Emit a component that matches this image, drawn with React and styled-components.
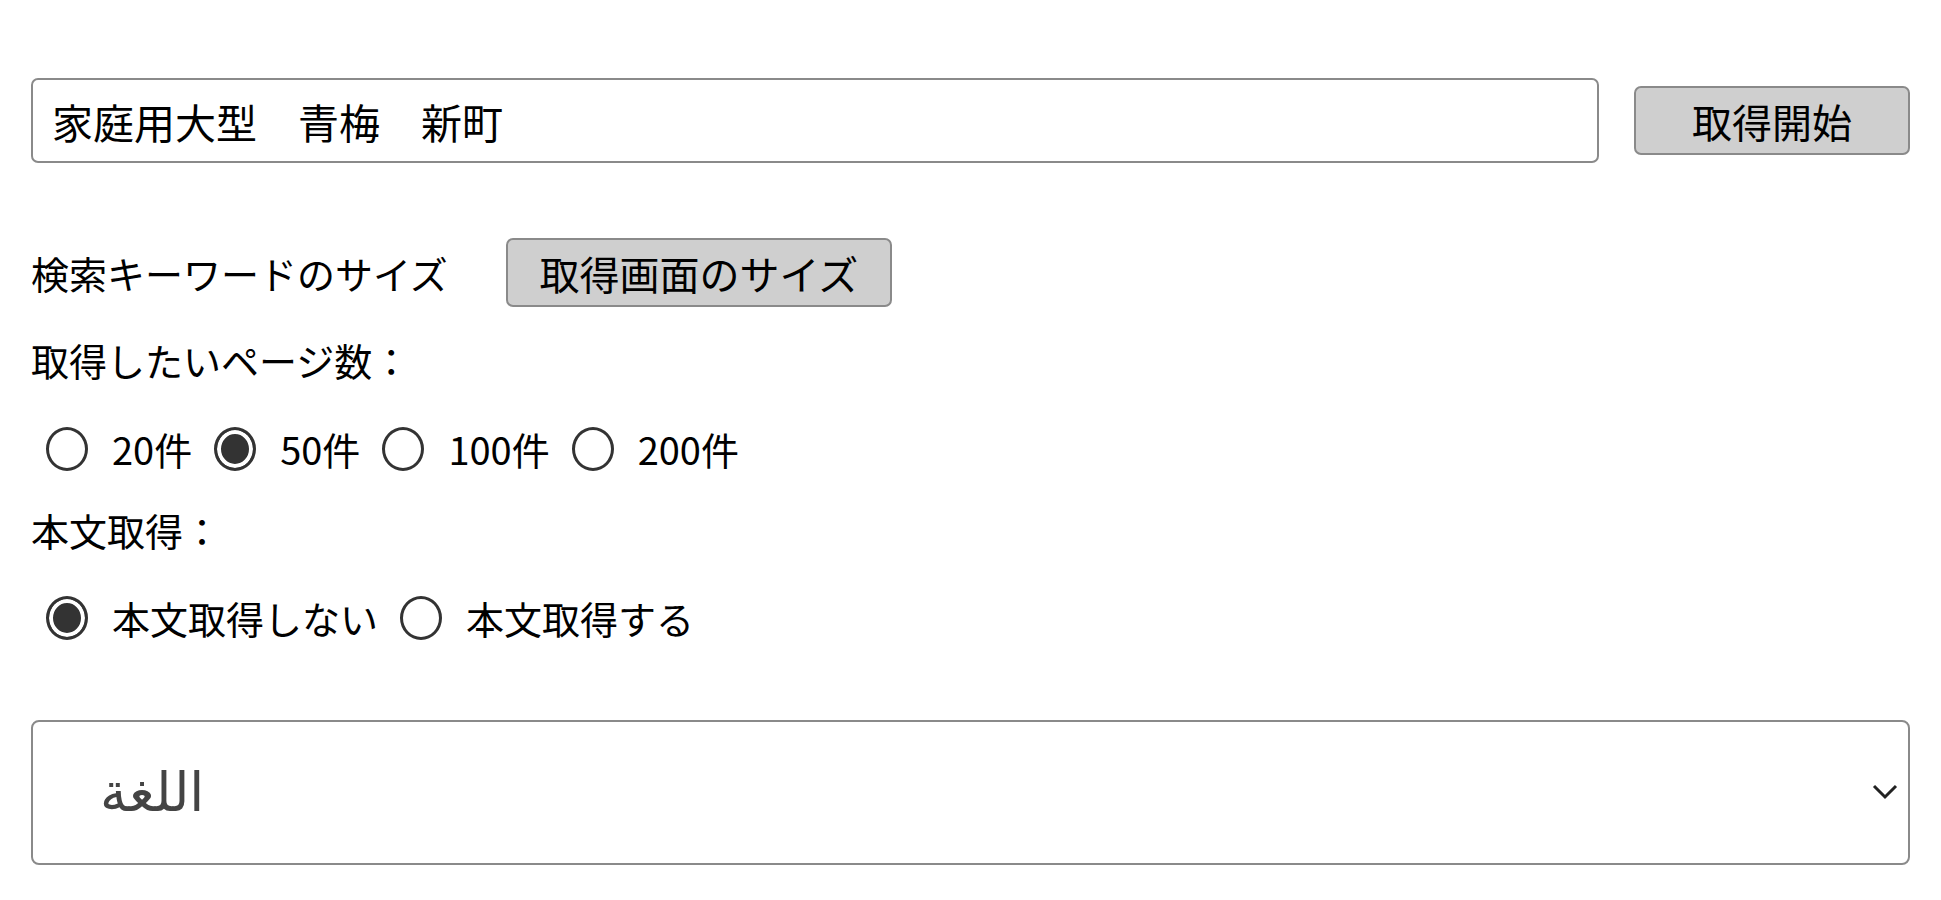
import React, { useState } from "react"
import styled, { createGlobalStyle } from "styled-components"

const GlobalStyle = createGlobalStyle`
  html, body {
    margin: 0;
    background: #fff;
  }
  body {
    font-family: "Noto Sans CJK JP", "Noto Sans", sans-serif;
    color: #000;
  }
`

const Page = styled.form`
  display: flex;
  flex-direction: column;
  padding: 78px 31px 0 31px;
`

const SearchRow = styled.div`
  display: flex;
  align-items: center;
  gap: 35px;
  height: 85px;
`

const KeywordInput = styled.input`
  flex: 1;
  height: 100%;
  box-sizing: border-box;
  border: 2px solid #8a8a8a;
  border-radius: 7px;
  padding: 0 19px;
  font: 41px/1 "Noto Sans CJK JP", sans-serif;
  color: #000;
  outline: none;
`

const GrayButton = styled.button`
  width: ${(p) => p.$w}px;
  height: 69px;
  box-sizing: border-box;
  border: 2px solid #8a8a8a;
  border-radius: 7px;
  background: #cfcfcf;
  font: 40px/1 "Noto Sans CJK JP", sans-serif;
  color: #000;
  padding: 0;
  cursor: pointer;
`

const Row = styled.div`
  display: flex;
  align-items: center;
  height: ${(p) => p.$h || 50}px;
  margin-top: ${(p) => p.$mt}px;
  gap: ${(p) => p.$gap || 0}px;
`

const Label = styled.span`
  font-size: 38px;
  line-height: 1;
  white-space: nowrap;
`

const RadioGroup = styled.div`
  display: flex;
  align-items: center;
  gap: 22px;
  padding-left: 15px;
`

const Option = styled.label`
  display: flex;
  align-items: center;
  gap: 24px;
  font-size: 38px;
  line-height: 1;
  cursor: pointer;
`

const Radio = styled.input.attrs({ type: "radio" })`
  appearance: none;
  margin: 0;
  width: 42px;
  height: 44px;
  box-sizing: border-box;
  border: 3px solid #333;
  border-radius: 50%;
  background: #fff;

  &:checked {
    background: #333;
    box-shadow: inset 0 0 0 4px #fff;
  }
`

const SelectWrap = styled.div`
  position: relative;
  margin-top: 77px;
  height: 145px;
`

const Select = styled.select`
  appearance: none;
  width: 100%;
  height: 100%;
  box-sizing: border-box;
  border: 2px solid #8a8a8a;
  border-radius: 8px;
  background: #fff;
  padding: 0 0 0 67px;
  font: 54px/1 "DejaVu Sans", "Noto Sans", sans-serif;
  color: #444;
  outline: none;
`

const Chevron = styled.svg`
  position: absolute;
  right: 12px;
  top: 64px;
  pointer-events: none;
`

const pageCounts = ["20件", "50件", "100件", "200件"]

export default function App() {
  const [pages, setPages] = useState("50件")
  const [body, setBody] = useState("off")

  return (
    <>
      <GlobalStyle />
      <Page onSubmit={(e) => e.preventDefault()}>
        <SearchRow>
          <KeywordInput defaultValue="家庭用大型　青梅　新町" />
          <GrayButton $w={276} type="submit">
            取得開始
          </GrayButton>
        </SearchRow>

        <Row $h={69} $mt={75} $gap={58}>
          <Label>検索キーワードのサイズ</Label>
          <GrayButton $w={386} type="button">
            取得画面のサイズ
          </GrayButton>
        </Row>

        <Row $mt={28}>
          <Label>取得したいページ数：</Label>
        </Row>

        <Row $mt={39}>
          <RadioGroup>
            {pageCounts.map((c) => (
              <Option key={c}>
                <Radio
                  name="pages"
                  checked={pages === c}
                  onChange={() => setPages(c)}
                />
                {c}
              </Option>
            ))}
          </RadioGroup>
        </Row>

        <Row $mt={31}>
          <Label>本文取得：</Label>
        </Row>

        <Row $mt={38}>
          <RadioGroup>
            <Option>
              <Radio
                name="body"
                checked={body === "off"}
                onChange={() => setBody("off")}
              />
              本文取得しない
            </Option>
            <Option>
              <Radio
                name="body"
                checked={body === "on"}
                onChange={() => setBody("on")}
              />
              本文取得する
            </Option>
          </RadioGroup>
        </Row>

        <SelectWrap>
          <Select defaultValue="ar">
            <option value="ar">اللغة</option>
            <option value="ja">日本語</option>
            <option value="en">English</option>
          </Select>
          <Chevron width="26" height="16" viewBox="0 0 26 16">
            <path
              d="M2 2 L13 13 L24 2"
              fill="none"
              stroke="#222"
              strokeWidth="3"
            />
          </Chevron>
        </SelectWrap>
      </Page>
    </>
  )
}
